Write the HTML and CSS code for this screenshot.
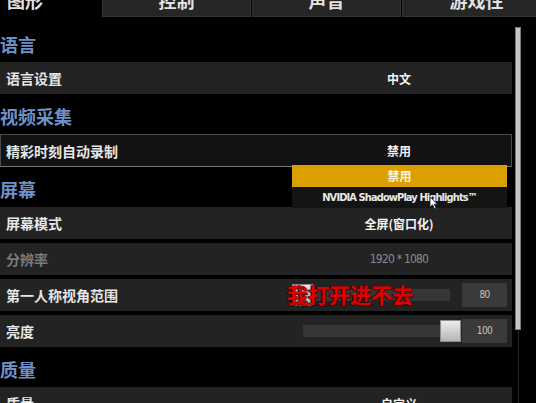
FILE: index.html
```html
<!DOCTYPE html>
<html lang="zh-CN">

<head>
    <meta charset="UTF-8">
    <meta name="viewport" content="width=device-width, initial-scale=1.0">
    <title>设置 - 图形</title>
    <link rel="stylesheet" href="styles.css">
</head>

<body>
    <div class="tabs">
        <div class="tab tab-first active">图形</div>
        <div class="tab">控制</div>
        <div class="tab">声音</div>
        <div class="tab">游戏性</div>
    </div>

    <div class="content">
        <div class="settings">
            <h3 class="section-title">语言</h3>
            <div class="setting-row">
                <span class="label">语言设置</span>
                <span class="value">中文</span>
            </div>

            <h3 class="section-title">视频采集</h3>
            <div class="setting-row focused">
                <span class="label">精彩时刻自动录制</span>
                <span class="value">禁用</span>
                <ul class="dropdown">
                    <li class="selected">禁用</li>
                    <li class="latin">NVIDIA ShadowPlay Highlights™</li>
                </ul>
                <svg class="cursor" width="10" height="14" viewBox="0 0 10 14">
                    <path d="M1 1 L1 11 L3.5 8.8 L5.6 13 L7.2 12.2 L5.2 8.2 L8.6 8.2 Z" fill="#fff" stroke="#222" stroke-width="0.9" stroke-linejoin="round" />
                </svg>
            </div>

            <h3 class="section-title">屏幕</h3>
            <div class="setting-row">
                <span class="label">屏幕模式</span>
                <span class="value">全屏(窗口化)</span>
            </div>
            <div class="setting-row disabled">
                <span class="label">分辨率</span>
                <span class="value latin">1920 * 1080</span>
            </div>
            <div class="setting-row">
                <span class="label">第一人称视角范围</span>
                <div class="slider-control">
                    <div class="slider">
                        <div class="slider-track"></div>
                        <div class="slider-handle" style="left: 0px"></div>
                    </div>
                    <span class="num-box">80</span>
                </div>
                <span class="note">我打开进不去</span>
            </div>
            <div class="setting-row">
                <span class="label">亮度</span>
                <div class="slider-control">
                    <div class="slider">
                        <div class="slider-track"></div>
                        <div class="slider-handle" style="left: 148px"></div>
                    </div>
                    <span class="num-box">100</span>
                </div>
            </div>

            <h3 class="section-title">质量</h3>
            <div class="setting-row">
                <span class="label">质量</span>
                <span class="value">自定义</span>
            </div>
        </div>

        <div class="scrollbar">
            <div class="scroll-thumb"></div>
            <div class="scroll-track"></div>
        </div>
    </div>
</body>

</html>
```

FILE: styles.css
```css
* {
    margin: 0;
    padding: 0;
    box-sizing: border-box;
}

body {
    width: 536px;
    height: 403px;
    overflow: hidden;
    background: #000;
    color: #e6e6e6;
    font-family: "Noto Sans CJK SC", "Noto Sans", sans-serif;
}

/* top tabs, cut off by the window edge */
.tabs {
    display: flex;
    gap: 1px;
    height: 34px;
    margin-top: -17px;
}

.tab {
    flex: 0 0 149px;
    line-height: 32px;
    text-align: center;
    font-size: 18px;
    font-weight: 700;
    color: #e2e2e2;
    background: #262626;
    border: 1px solid #343434;
}

.tab-first {
    flex-basis: 101px;
    text-align: left;
    padding-left: 6px;
}

.tab.active {
    background: #000;
    border-color: #000;
}

.content {
    display: flex;
    height: 386px;
}

.settings {
    width: 512px;
    padding-top: 5px;
}

.section-title {
    height: 40px;
    padding-top: 4px;
    line-height: 36px;
    font-size: 18px;
    font-weight: 700;
    color: #6d91c8;
}

.setting-row {
    position: relative;
    display: grid;
    grid-template-columns: 1fr 218px;
    align-items: center;
    height: 32px;
    padding-right: 4px;
    background: #232323;
}

.setting-row + .setting-row {
    margin-top: 4px;
}

.setting-row.focused {
    height: 33px;
    background: #121212;
    border: 1px solid #4a4a4a;
    border-bottom-color: #777;
    padding-right: 3px;
}

.label {
    padding-left: 6px;
    font-size: 14px;
    font-weight: 700;
}

.focused .label {
    padding-left: 5px;
}

.value {
    text-align: center;
    font-size: 12px;
    font-weight: 700;
    color: #f2f2f2;
}

.disabled .label {
    color: #7a7a7a;
}

.disabled .value {
    color: #8a8a8a;
    font-weight: normal;
    letter-spacing: -0.8px;
}

.latin {
    font-family: "DejaVu Sans Condensed", "DejaVu Sans", sans-serif;
    font-stretch: condensed;
}

/* open dropdown */
.dropdown {
    position: absolute;
    left: 291px;
    top: 30px;
    width: 215px;
    list-style: none;
    z-index: 5;
}

.dropdown li {
    height: 21px;
    line-height: 21px;
    text-align: center;
    font-size: 12px;
    font-weight: 700;
    color: #e8e8e8;
    background: #141414;
}

.dropdown li.selected {
    height: 22px;
    line-height: 22px;
    background: #dc9f00;
    color: #fff6e0;
}

.dropdown li.latin {
    font-size: 11px;
    letter-spacing: -0.9px;
}

.cursor {
    position: absolute;
    left: 428px;
    top: 61px;
    z-index: 6;
}

/* sliders */
.slider-control {
    display: flex;
    align-items: center;
    gap: 1px;
    padding-left: 2px;
}

.slider {
    position: relative;
    width: 169px;
    height: 22px;
}

.slider-track {
    position: absolute;
    left: 11px;
    right: 11px;
    top: 5px;
    height: 12px;
    background: #363636;
}

.slider-handle {
    position: absolute;
    top: 0;
    width: 21px;
    height: 22px;
    background: linear-gradient(#ececec, #b4b4b4);
    border: 1px solid #8c8c8c;
}

.num-box {
    width: 45px;
    height: 24px;
    line-height: 24px;
    text-align: center;
    font-family: "DejaVu Sans Condensed", "DejaVu Sans", sans-serif;
    font-size: 10px;
    letter-spacing: -0.6px;
    color: #c4c4c4;
    background: #3a3a3a;
}

.note {
    position: absolute;
    left: 287px;
    top: 3px;
    font-size: 21px;
    line-height: 24px;
    font-weight: 700;
    color: #e10000;
    text-shadow: 1px 1px 1px #300, -1px 0 1px #300;
    z-index: 4;
}

/* scrollbar */
.scrollbar {
    display: flex;
    flex-direction: column;
    align-items: center;
    width: 6px;
    margin-left: 3px;
    padding-top: 10px;
}

.scroll-thumb {
    width: 6px;
    height: 303px;
    background: #c6c6c6;
    border: 1px solid #7c7c7c;
}

.scroll-track {
    flex: 1;
    width: 1px;
    background: #262626;
}
```
